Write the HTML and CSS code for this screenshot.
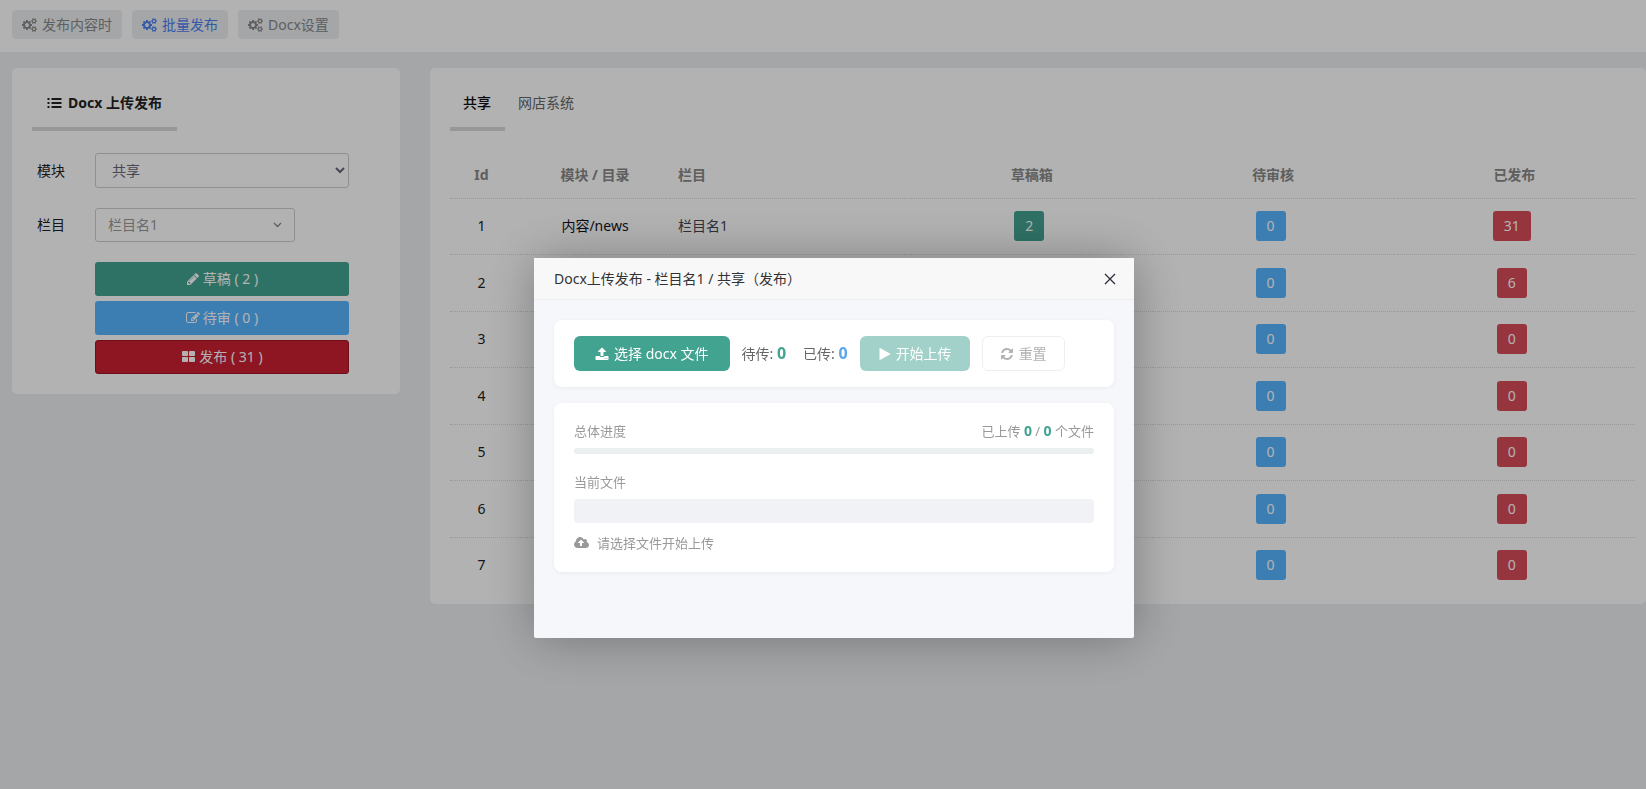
FILE: index.html
```html
<!DOCTYPE html>
<html lang="zh-CN">
<head>
    <meta charset="UTF-8">
    <meta name="viewport" content="width=device-width, initial-scale=1.0">
    <title>Docx 上传发布</title>
    <link rel="stylesheet" href="styles.css">
</head>
<body>
<!-- 图标 -->
<svg class="sprite" aria-hidden="true">
    <symbol id="cogs" viewBox="0 0 1920 1792"><path d="M896 896q0-106-75-181t-181-75-181 75-75 181 75 181 181 75 181-75 75-181zm768 512q0-52-38-90t-90-38-90 38-38 90q0 53 37.5 90.5t90.5 37.5 90.5-37.5 37.5-90.5zm0-1024q0-52-38-90t-90-38-90 38-38 90q0 53 37.5 90.5t90.5 37.5 90.5-37.5 37.5-90.5zm-384 421v185q0 10-7 19.5t-16 10.5l-155 24q-11 35-32 76 34 48 90 115 7 11 7 20 0 12-7 19-23 30-82.5 89.5t-78.5 59.5q-11 0-21-7l-115-90q-37 19-77 31-11 108-23 155-7 24-30 24h-186q-11 0-20-7.5t-10-17.5l-23-153q-34-10-75-31l-118 89q-7 7-20 7-11 0-21-8-144-133-144-160 0-9 7-19 10-14 41-53t47-61q-23-44-35-82l-152-24q-10-1-17-9.5t-7-19.5v-185q0-10 7-19.5t16-10.5l155-24q11-35 32-76-34-48-90-115-7-11-7-20 0-12 7-20 22-30 82-89t79-59q11 0 21 7l115 90q34-18 77-32 11-108 23-154 7-24 30-24h186q11 0 20 7.5t10 17.5l23 153q34 10 75 31l118-89q8-7 20-7 11 0 21 8 144 133 144 160 0 8-7 19-12 16-42 54t-45 60q23 48 34 82l152 23q10 2 17 10.5t7 19.5zm640 533v140q0 16-149 31-12 27-30 52 51 113 51 138 0 4-4 7-122 71-124 71-8 0-46-47t-52-68q-20 2-30 2t-30-2q-14 21-52 68t-46 47q-2 0-124-71-4-3-4-7 0-25 51-138-18-25-30-52-149-15-149-31v-140q0-16 149-31 13-29 30-52-51-113-51-138 0-4 4-7 4-2 35-20t59-34 30-16q8 0 46 46.5t52 67.5q20-2 30-2t30 2q51-71 92-112l6-2q4 0 124 70 4 3 4 7 0 25-51 138 17 23 30 52 149 15 149 31zm0-1024v140q0 16-149 31-12 27-30 52 51 113 51 138 0 4-4 7-122 71-124 71-8 0-46-47t-52-68q-20 2-30 2t-30-2q-14 21-52 68t-46 47q-2 0-124-71-4-3-4-7 0-25 51-138-18-25-30-52-149-15-149-31v-140q0-16 149-31 13-29 30-52-51-113-51-138 0-4 4-7 4-2 35-20t59-34 30-16q8 0 46 46.5t52 67.5q20-2 30-2t30 2q51-71 92-112l6-2q4 0 124 70 4 3 4 7 0 25-51 138 17 23 30 52 149 15 149 31z"/></symbol>
    <symbol id="list" viewBox="0 0 14 14"><path d="M0 2h2v2H0zM4 2h10v2H4zM0 6h2v2H0zM4 6h10v2H4zM0 10h2v2H0zM4 10h10v2H4z"/></symbol>
    <symbol id="pencil" viewBox="0 0 1792 1792"><path d="M491 1536l91-91-235-235-91 91v107h128v128h107zm523-928q0-22-22-22-10 0-17 7l-542 542q-7 7-7 17 0 22 22 22 10 0 17-7l542-542q7-7 7-17zm-54-192l416 416-832 832h-416v-416zm683 96q0 53-37 90l-166 166-416-416 166-165q36-38 90-38 53 0 91 38l235 234q37 39 37 91z"/></symbol>
    <symbol id="edit" viewBox="0 0 1792 1792"><path d="M888 1184l116-116-152-152-116 116v56h96v96h56zm440-720q-16-16-33 1l-350 350q-17 17-1 33t33-1l350-350q17-17 1-33zm80 594v190q0 119-84.5 203.5t-203.5 84.5h-832q-119 0-203.5-84.5t-84.5-203.5v-832q0-119 84.5-203.5t203.5-84.5h832q63 0 117 25 15 7 18 23 3 17-9 29l-49 49q-14 14-32 8-23-6-45-6h-832q-66 0-113 47t-47 113v832q0 66 47 113t113 47h832q66 0 113-47t47-113v-126q0-13 9-22l64-64q15-15 35-7t20 29zm-96-738l288 288-672 672h-288v-288zm444 132l-92 92-288-288 92-92q28-28 68-28t68 28l152 152q28 28 28 68t-28 68z"/></symbol>
    <symbol id="th-large" viewBox="0 0 1792 1792"><path d="M832 1024v384q0 52-38 90t-90 38h-512q-52 0-90-38t-38-90v-384q0-52 38-90t90-38h512q52 0 90 38t38 90zm0-768v384q0 52-38 90t-90 38h-512q-52 0-90-38t-38-90v-384q0-52 38-90t90-38h512q52 0 90 38t38 90zm896 768v384q0 52-38 90t-90 38h-512q-52 0-90-38t-38-90v-384q0-52 38-90t90-38h512q52 0 90 38t38 90zm0-768v384q0 52-38 90t-90 38h-512q-52 0-90-38t-38-90v-384q0-52 38-90t90-38h512q52 0 90 38t38 90z"/></symbol>
    <symbol id="upload" viewBox="0 0 1792 1792"><path d="M1344 1472q0-26-19-45t-45-19-45 19-19 45 19 45 45 19 45-19 19-45zm256 0q0-26-19-45t-45-19-45 19-19 45 19 45 45 19 45-19 19-45zm128-224v320q0 40-28 68t-68 28h-1472q-40 0-68-28t-28-68v-320q0-40 28-68t68-28h427q21 56 70.5 92t110.5 36h256q61 0 110.5-36t70.5-92h427q40 0 68 28t28 68zm-325-648q-17 40-59 40h-256v448q0 26-19 45t-45 19h-256q-26 0-45-19t-19-45v-448h-256q-42 0-59-40-17-39 14-69l448-448q18-19 45-19t45 19l448 448q31 30 14 69z"/></symbol>
    <symbol id="play" viewBox="0 0 1792 1792"><path d="M1576 927l-1328 738q-23 13-39.5 3t-16.5-36v-1472q0-26 16.5-36t39.5 3l1328 738q23 13 23 31t-23 31z"/></symbol>
    <symbol id="refresh" viewBox="0 0 1792 1792"><path d="M1639 1056q0 5-1 7-64 268-268 434.5t-478 166.5q-146 0-282.5-55t-243.5-157l-129 129q-19 19-45 19t-45-19-19-45v-448q0-26 19-45t45-19h448q26 0 45 19t19 45-19 45l-137 137q71 66 161 102t187 36q134 0 250-65t186-179q11-17 53-117 8-23 30-23h192q13 0 22.5 9.5t9.5 22.5zm25-800v448q0 26-19 45t-45 19h-448q-26 0-45-19t-19-45 19-45l138-138q-148-137-349-137-134 0-250 65t-186 179q-11 17-53 117-8 23-30 23h-199q-13 0-22.5-9.5t-9.5-22.5v-7q65-268 270-434.5t480-166.5q146 0 284 55.5t245 156.5l130-129q19-19 45-19t45 19 19 45z"/></symbol>
    <symbol id="cloud" viewBox="0 0 1920 1792"><path d="M1280 864q0-14-9-23l-352-352q-9-9-23-9t-23 9l-351 351q-10 12-10 24 0 14 9 23t23 9h224v352q0 13 9.5 22.5t22.5 9.5h192q13 0 22.5-9.5t9.5-22.5v-352h224q13 0 22.5-9.5t9.5-22.5zm640 288q0 159-112.5 271.5t-271.5 112.5h-1088q-185 0-316.5-131.5t-131.5-316.5q0-130 70-240t188-165q-2-30-2-43 0-212 150-362t362-150q156 0 285.5 87t188.5 231q71-62 166-62 106 0 181 75t75 181q0 76-41 138 130 31 213.5 135.5t83.5 238.5z"/></symbol>
</svg>

<nav class="topbar">
    <a href="#"><svg class="icon wide"><use href="#cogs"/></svg>发布内容时</a>
    <a href="#" class="active"><svg class="icon wide"><use href="#cogs"/></svg>批量发布</a>
    <a href="#"><svg class="icon wide"><use href="#cogs"/></svg>Docx设置</a>
</nav>

<main class="main">
    <section class="panel side">
        <h2 class="side_title"><svg class="icon wide"><use href="#list"/></svg>Docx 上传发布</h2>
        <form class="form">
            <label for="module">模块</label>
            <select id="module" class="module">
                <option>共享</option>
            </select>
            <label for="column">栏目</label>
            <select id="column" class="column">
                <option>栏目名1</option>
            </select>
            <div class="btns">
                <button type="button" class="btn green"><svg class="icon"><use href="#pencil"/></svg>草稿 ( 2 )</button>
                <button type="button" class="btn blue"><svg class="icon"><use href="#edit"/></svg>待审 ( 0 )</button>
                <button type="button" class="btn crimson"><svg class="icon wide"><use href="#th-large"/></svg>发布 ( 31 )</button>
            </div>
        </form>
    </section>

    <section class="panel content">
        <div class="tabs">
            <a href="#" class="active">共享</a>
            <a href="#">网店系统</a>
        </div>
        <table class="list">
            <thead>
                <tr>
                    <th class="id">Id</th>
                    <th class="dir">模块 / 目录</th>
                    <th class="name">栏目</th>
                    <th>草稿箱</th>
                    <th>待审核</th>
                    <th>已发布</th>
                </tr>
            </thead>
            <tbody id="tbody"></tbody>
        </table>
    </section>
</main>

<!-- 弹窗 -->
<div class="shade">
    <div class="dialog" role="dialog" aria-labelledby="dialog_title">
        <header class="dialog_head">
            <h3 id="dialog_title">Docx上传发布 - 栏目名1 / 共享（发布）</h3>
            <button type="button" class="close" aria-label="关闭"><svg viewBox="0 0 12 12"><path d="M1 1l10 10M11 1L1 11"/></svg></button>
        </header>
        <div class="dialog_body">
            <div class="card tools">
                <button type="button" class="tool pick"><svg class="icon"><use href="#upload"/></svg>选择 docx 文件</button>
                <span class="count">待传: <b class="c_green">0</b></span>
                <span class="count">已传: <b class="c_blue">0</b></span>
                <button type="button" class="tool start" disabled><svg class="icon"><use href="#play"/></svg>开始上传</button>
                <button type="button" class="tool reset" disabled><svg class="icon"><use href="#refresh"/></svg>重置</button>
            </div>
            <div class="card state">
                <div class="state_row">
                    <label for="total">总体进度</label>
                    <span>已上传 <b>0</b> / <b>0</b> 个文件</span>
                </div>
                <progress id="total" class="bar thin" value="0" max="100"></progress>
                <div class="state_row">
                    <label for="current">当前文件</label>
                </div>
                <progress id="current" class="bar thick" value="0" max="100"></progress>
                <p class="tip"><svg class="icon wide"><use href="#cloud"/></svg>请选择文件开始上传</p>
            </div>
        </div>
    </div>
</div>

<script>
// 数据
let data = [
    { id: 1, dir: '内容/news', name: '栏目名1', draft: 2, wait: 0, done: 31 },
    { id: 2, wait: 0, done: 6 },
    { id: 3, wait: 0, done: 0 },
    { id: 4, wait: 0, done: 0 },
    { id: 5, wait: 0, done: 0 },
    { id: 6, wait: 0, done: 0 },
    { id: 7, wait: 0, done: 0 }
];

// 数量标签，没有数据时不显示
let num = (value, color) => value === undefined ? '' : `<a href="#" class="num ${color}">${value}</a>`;

// 渲染表格
document.querySelector('#tbody').innerHTML = data.map( el => `
    <tr>
        <td class="id">${el.id}</td>
        <td class="dir">${el.dir || ''}</td>
        <td class="name">${el.name || ''}</td>
        <td>${num(el.draft, 'green')}</td>
        <td>${num(el.wait, 'blue')}</td>
        <td>${num(el.done, 'red')}</td>
    </tr>
`).join('');
</script>
</body>
</html>
```
FILE: styles.css
```css
* {
    margin: 0;
    padding: 0;
    box-sizing: border-box;
}

body {
    min-height: 100vh;
    background: #eceef1;
    color: #222;
    font: 14px/24px "Noto Sans", "Noto Sans CJK SC", sans-serif;
}

a {
    text-decoration: none;
    color: inherit;
}

button,
select {
    font: inherit;
}

.sprite {
    display: none;
}

.icon {
    width: 14px;
    height: 14px;
    flex: none;
    fill: currentColor;
}

.icon.wide {
    width: 15px;
}

/* 顶部导航 */
.topbar {
    display: flex;
    gap: 10px;
    height: 52px;
    padding: 10px 12px;
    background: #fff;
}

.topbar a {
    display: flex;
    align-items: center;
    gap: 5px;
    height: 29px;
    padding: 0 10px;
    border-radius: 4px;
    background: #eceef1;
    color: #888;
}

.topbar a.active {
    color: #4a80f0;
}

.main {
    display: flex;
    align-items: flex-start;
    gap: 30px;
    padding: 16px 0 0 12px;
}

.panel {
    border-radius: 5px;
    background: #fff;
}

/* 左侧 */
.side {
    flex: none;
    width: 388px;
    padding: 0 20px 20px;
}

.side_title {
    display: flex;
    align-items: center;
    gap: 6px;
    width: fit-content;
    height: 63px;
    padding: 11px 15px 0;
    border-bottom: 4px solid #d8dadb;
    font-size: 14px;
    font-weight: bold;
}

.form {
    display: grid;
    grid-template-columns: 58px 254px;
    align-items: center;
    row-gap: 20px;
    padding: 22px 0 0 5px;
}

.form select {
    height: 34px;
    border: 1px solid #cfcfcf;
    border-radius: 3px;
    background-color: #fff;
}

.form .module {
    height: 35px;
    padding-left: 12px;
    color: #66667a;
}

.form .column {
    width: 200px;
    padding-left: 12px;
    appearance: none;
    background: url("data:image/svg+xml,%3Csvg xmlns='http://www.w3.org/2000/svg' width='9' height='6'%3E%3Cpath d='M1 1l3.5 3.5L8 1' fill='none' stroke='%23888' stroke-width='1.3'/%3E%3C/svg%3E") no-repeat right 12px center;
    color: #999;
}

.btns {
    grid-column: 2;
    display: grid;
    gap: 5px;
}

.btn {
    display: flex;
    align-items: center;
    justify-content: center;
    gap: 3px;
    height: 34px;
    border: 1px solid transparent;
    border-radius: 3px;
    color: #fff;
}

.green {
    background-color: #43a391;
}

.blue {
    background-color: #57b5ff;
}

.red {
    background-color: #d84c5b;
}

.crimson {
    background-color: #cc1f31;
    border-color: #9c1524;
}

/* 右侧 */
.content {
    flex: 1;
    padding: 0 11px 10px 20px;
}

.tabs {
    display: flex;
}

.tabs a {
    height: 63px;
    padding: 23px 14px 0 13px;
    border-bottom: 4px solid transparent;
    color: #666;
}

.tabs a.active {
    border-color: #d8d8d8;
    color: #111;
    font-weight: 500;
}

.list {
    width: 100%;
    margin-top: 21px;
    border-collapse: separate;
    border-spacing: 0;
    table-layout: fixed;
}

.list th,
.list td {
    height: 56px;
    padding: 0 8px 2px;
    text-align: center;
    border-bottom: 1px dotted #ddd;
}

.list th {
    height: 47px;
    padding-bottom: 0;
    color: #888;
    font-weight: bold;
}

.list tr:nth-child(even) td {
    height: 57px;
    padding-bottom: 0;
}

.list tr:last-child td {
    border-bottom: 0;
}

.list .id {
    width: 70px;
    padding-right: 15px;
}

.list .dir {
    width: 150px;
}

.list td.dir {
    color: #112;
}

.list .name {
    text-align: left;
}

.list td.name {
    color: #445;
}

.num {
    display: inline-block;
    height: 30px;
    margin-right: 5px;
    padding: 0 11px;
    border-radius: 3px;
    color: #fff;
    line-height: 30px;
}

/* 弹窗 */
.shade {
    position: fixed;
    inset: 0;
    display: flex;
    justify-content: center;
    align-items: flex-start;
    padding: 258px 0 0 22px;
    background: rgba(0, 0, 0, .3);
}

.dialog {
    width: 600px;
    min-height: 380px;
    border-radius: 2px;
    background: #f5f7fb;
    box-shadow: 1px 1px 50px rgba(0, 0, 0, .3);
}

.dialog_head {
    display: flex;
    align-items: center;
    justify-content: space-between;
    height: 42px;
    padding: 0 18px 0 20px;
    border-bottom: 1px solid #eee;
    background: #f8f8f8;
}

.dialog_head h3 {
    color: #333;
    font-size: 14px;
    font-weight: normal;
}

.close {
    display: flex;
    border: 0;
    background: none;
}

.close svg {
    width: 12px;
    height: 12px;
    fill: none;
    stroke: #2e2d3c;
    stroke-width: 1.3;
}

.dialog_body {
    display: grid;
    gap: 16px;
    padding: 20px;
}

.card {
    border-radius: 8px;
    background: #fff;
    box-shadow: 0 1px 4px rgba(0, 0, 0, .05);
}

.tools {
    display: flex;
    align-items: center;
    padding: 16px 20px;
}

.tool {
    display: flex;
    align-items: center;
    justify-content: center;
    gap: 5px;
    height: 35px;
    padding: 0 17px;
    border: 1px solid transparent;
    border-radius: 6px;
}

.pick {
    margin-right: 12px;
    padding: 0 20px;
    background: #43a391;
    color: #fff;
}

.count {
    color: #666;
}

.count + .count {
    margin: 0 12px 0 17px;
}

.count b {
    font-size: 16px;
}

.c_green {
    color: #43a391;
}

.c_blue {
    color: #5ba7ec;
}

.start {
    gap: 4px;
    margin-right: 12px;
    background: #a1d1c8;
    color: #fff;
}

.reset {
    border-color: #eee;
    background: #fff;
    color: #b2b2b2;
}

.state {
    padding: 16px 20px 17px;
    color: #999;
    font-size: 13px;
}

.state_row {
    display: flex;
    justify-content: space-between;
}

.state_row b {
    color: #43a391;
    font-size: 14px;
}

.bar {
    display: block;
    width: 100%;
    border: 0;
    appearance: none;
    overflow: hidden;
}

.bar::-webkit-progress-bar {
    background: transparent;
}

.thin {
    height: 6px;
    margin: 5px 0 16px;
    border-radius: 3px;
    background: #ebefef;
}

.thick {
    height: 24px;
    margin: 5px 0 8px;
    border-radius: 4px;
    background: #f0f2f6;
}

.tip {
    display: flex;
    align-items: center;
    gap: 8px;
}
```
